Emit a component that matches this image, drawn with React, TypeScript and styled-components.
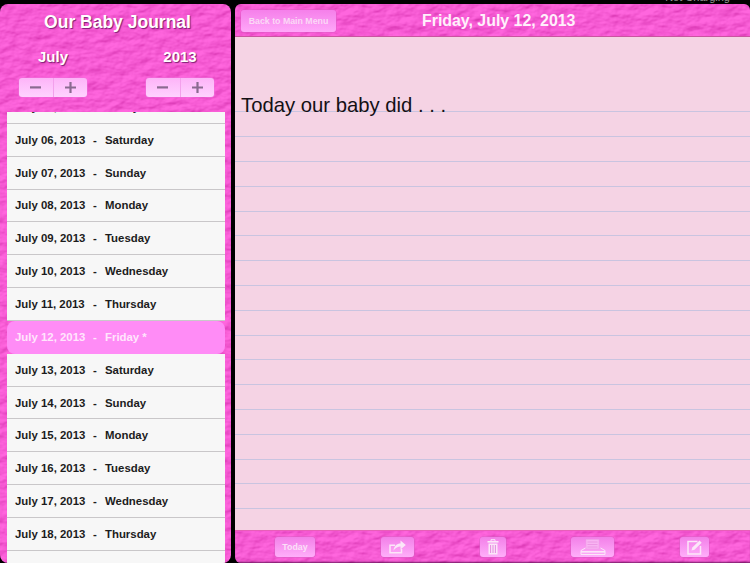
import React from "react";
import styled, { createGlobalStyle } from "styled-components";

const texture = `url("data:image/svg+xml,${encodeURIComponent(
  `<svg xmlns='http://www.w3.org/2000/svg' width='300' height='300'><filter id='f' x='0' y='0' width='100%' height='100%' color-interpolation-filters='sRGB'><feTurbulence type='fractalNoise' baseFrequency='0.07 0.12' numOctaves='3' seed='7' stitchTiles='stitch'/><feDiffuseLighting surfaceScale='1.3' diffuseConstant='1' lighting-color='#ffffff'><feDistantLight azimuth='235' elevation='60'/></feDiffuseLighting><feColorMatrix type='matrix' values='0 0 0 0 0.72  0 0 0 0 0.05  0 0 0 0 0.55  -1.5 0 0 0 1.42'/></filter><rect width='300' height='300' filter='url(#f)'/></svg>`
)}")`;

const GlobalStyle = createGlobalStyle`
  html, body {
    margin: 0;
    padding: 0;
    background: black;
    overflow: hidden;
  }
  * {
    box-sizing: border-box;
  }
`;

const Screen = styled.div`
  width: 750px;
  height: 563px;
  background: black;
  font-family: "Liberation Sans", Arial, sans-serif;
  display: flex;
  flex-direction: column;
  overflow: hidden;
`;

const StatusBar = styled.div`
  height: 4px;
  flex: none;
  overflow: hidden;
  display: flex;
  justify-content: flex-end;
  color: #9a9a9a;
  font-size: 11px;
  line-height: 4px;
  padding-right: 20px;
`;

const StatusText = styled.span`
  margin-top: -5px;
`;

const Columns = styled.div`
  flex: 1;
  min-height: 0;
  display: flex;
  gap: 4px;
`;

const Sidebar = styled.aside`
  width: 231px;
  flex: none;
  background-color: #ff66de;
  background-image: ${texture};
  border-radius: 8px;
  display: flex;
  flex-direction: column;
  overflow: hidden;
`;

const AppTitle = styled.h1`
  margin: 8px 0 0;
  height: 20px;
  padding-left: 4px;
  font-size: 17.5px;
  line-height: 20px;
  font-weight: bold;
  text-align: center;
  color: #fff;
  text-shadow: 1px 1px 1px #7a2070;
`;

const PickerRow = styled.div`
  display: flex;
  justify-content: space-between;
  padding: 16px 17px 0 19px;
  height: 80px;
  flex: none;
`;

const Picker = styled.div`
  width: 68px;
  display: flex;
  flex-direction: column;
  align-items: center;
  gap: 12px;
`;

const PickerLabel = styled.div`
  height: 18px;
  font-size: 15px;
  line-height: 18px;
  font-weight: bold;
  color: #fff;
  text-shadow: 1px 1px 1px #7a2070;
`;

const Stepper = styled.div`
  width: 68px;
  height: 19px;
  display: flex;
  border-radius: 3px;
  overflow: hidden;
  background: linear-gradient(#fdb4f8, #ffd2ff);
  box-shadow: 0 0 0 0.5px #f070dc;
`;

const StepButton = styled.div<{ $divider?: boolean }>`
  flex: 1;
  display: flex;
  align-items: center;
  justify-content: center;
  border-left: ${(p) => (p.$divider ? "1px solid #f3a0ec" : "none")};
`;

const RowList = styled.div`
  flex: 1;
  min-height: 0;
  margin: 0 6px 0 7px;
  overflow: hidden;
`;

const RowTrack = styled.div`
  margin-top: -21px;
`;

const DayRow = styled.div<{ $active?: boolean }>`
  height: 32.85px;
  display: flex;
  align-items: center;
  padding-left: 8px;
  font-size: 11.4px;
  font-weight: bold;
  color: ${(p) => (p.$active ? "#ffe6fc" : "#1c1c1c")};
  background: ${(p) => (p.$active ? "#ff8cf6" : "#f7f7f7")};
  border-bottom: 1px solid ${(p) => (p.$active ? "#ff8cf6" : "#c9c7c9")};
  border-radius: ${(p) => (p.$active ? "8px" : "0")};
`;

const DayDate = styled.span`
  width: 78px;
`;

const DayDash = styled.span`
  width: 12px;
`;

const Journal = styled.main`
  flex: 1;
  min-width: 0;
  display: flex;
  flex-direction: column;
  border-radius: 6px 6px 0 6px;
  overflow: hidden;
`;

const HeaderBar = styled.header`
  height: 33px;
  flex: none;
  display: flex;
  align-items: center;
  padding: 1px 0 0 6px;
  background-color: #ff66de;
  background-image: ${texture};
  border-bottom: 1px solid #c9559f;
`;

const BackButton = styled.div`
  width: 95px;
  height: 22px;
  border-radius: 3px;
  display: flex;
  align-items: center;
  justify-content: center;
  font-size: 8.8px;
  font-weight: bold;
  color: #fbd8f6;
  background: linear-gradient(#f57fea, #ffa8f9);
  box-shadow: 0 0 0 0.5px #e05cc8;
`;

const DateTitle = styled.div`
  margin-left: 86px;
  font-size: 15.9px;
  font-weight: bold;
  color: #fff0fb;
`;

const Paper = styled.section`
  flex: 1;
  min-height: 0;
  background-color: #f5d3e4;
  background-image: linear-gradient(#f5d3e4, #f5d3e4),
    repeating-linear-gradient(
      to bottom,
      transparent 0,
      transparent 23.8px,
      #c9c4e0 23.8px,
      #c9c4e0 24.8px
    );
  background-size: 100% 74px, 100% 100%;
  background-repeat: no-repeat;
  background-position: 0 0, 0 1.4px;
  padding: 55px 0 0 6px;
`;

const EntryText = styled.div`
  font-size: 20.3px;
  line-height: 26px;
  color: #141014;
`;

const Toolbar = styled.footer`
  height: 33px;
  flex: none;
  display: flex;
  align-items: flex-start;
  justify-content: space-between;
  padding: 6px 41px 0 40px;
  background-color: #ff66de;
  background-image: ${texture};
  border-top: 1px solid #e85fb8;
  box-shadow: inset 0 -2px 2px -1px rgba(70, 0, 60, 0.75);
`;

const ToolButton = styled.div<{ $width: number }>`
  width: ${(p) => p.$width}px;
  height: 20px;
  border-radius: 3px;
  display: flex;
  align-items: center;
  justify-content: center;
  font-size: 8.8px;
  font-weight: bold;
  color: #fbe0f8;
  background: linear-gradient(#f27fe8, #ffaefa);
  box-shadow: 0 0 0 0.5px #d860c4;
`;

const dayRows = [
  { date: "July 05, 2013", day: "Friday" },
  { date: "July 06, 2013", day: "Saturday" },
  { date: "July 07, 2013", day: "Sunday" },
  { date: "July 08, 2013", day: "Monday" },
  { date: "July 09, 2013", day: "Tuesday" },
  { date: "July 10, 2013", day: "Wednesday" },
  { date: "July 11, 2013", day: "Thursday" },
  { date: "July 12, 2013", day: "Friday *", active: true },
  { date: "July 13, 2013", day: "Saturday" },
  { date: "July 14, 2013", day: "Sunday" },
  { date: "July 15, 2013", day: "Monday" },
  { date: "July 16, 2013", day: "Tuesday" },
  { date: "July 17, 2013", day: "Wednesday" },
  { date: "July 18, 2013", day: "Thursday" },
  { date: "July 19, 2013", day: "Friday" },
];

const MinusIcon = () => (
  <svg width="11" height="11" viewBox="0 0 11 11">
    <rect x="0" y="4.3" width="11" height="2.2" fill="#8a6a90" />
  </svg>
);

const PlusIcon = () => (
  <svg width="11" height="11" viewBox="0 0 11 11">
    <path d="M4.4 0h2.2v4.4H11v2.2H6.6V11H4.4V6.6H0V4.4h4.4z" fill="#8a6a90" />
  </svg>
);

const ShareIcon = () => (
  <svg width="17" height="14" viewBox="0 0 17 14" fill="none">
    <path d="M12.500 9V12.800H1V5.200H6" stroke="#fbe6f8" strokeWidth="1.500" />
    <path d="M4.500 10.500C5 6 8 3.600 11.500 3.600V.5L16.800 5 11.500 9.500V6.400C9 6.400 6.500 7.800 4.500 10.500z" fill="#fbe6f8" />
  </svg>
);

const TrashIcon = () => (
  <svg width="12" height="16" viewBox="0 0 12 16" fill="none">
    <rect x="0.5" y="2" width="11" height="1.600" fill="#fbe6f8" />
    <path d="M4 2V.7h4V2" stroke="#fbe6f8" strokeWidth="1" />
    <path d="M1.500 4.500h9V15.500h-9z" fill="#fbe6f8" />
    <path d="M3.600 6v8M6 6v8M8.400 6v8" stroke="#e080da" strokeWidth="0.9" />
  </svg>
);

const PrintIcon = () => (
  <svg width="26" height="16" viewBox="0 0 26 16" fill="none">
    <path d="M6 0.500h13V10H6z" fill="#f8b4f2" stroke="#f0a0e8" strokeWidth="0.6" />
    <path d="M7.500 3h10M7.500 5.500h10M7.500 8h10" stroke="#e88ce0" strokeWidth="0.7" />
    <path d="M5.500 9 1 11.500V15.500H25V11.500L20.500 9" stroke="#fbe6f8" strokeWidth="1" />
    <rect x="1" y="12" width="24" height="1.600" fill="#fbe6f8" />
  </svg>
);

const ComposeIcon = () => (
  <svg width="15" height="15" viewBox="0 0 15 15" fill="none">
    <path d="M10.500 1.500H1V14H13.500V6" stroke="#fbe6f8" strokeWidth="1.500" />
    <path d="M4.500 10.500 5.300 7.500 12.500 .5 14.700 2.700 7.500 9.800z" fill="#fbe6f8" />
  </svg>
);

export default function App() {
  return (
    <>
      <GlobalStyle />
      <Screen>
        <StatusBar>
          <StatusText>Not Charging</StatusText>
        </StatusBar>
        <Columns>
          <Sidebar>
            <AppTitle>Our Baby Journal</AppTitle>
            <PickerRow>
              <Picker>
                <PickerLabel>July</PickerLabel>
                <Stepper>
                  <StepButton><MinusIcon /></StepButton>
                  <StepButton $divider><PlusIcon /></StepButton>
                </Stepper>
              </Picker>
              <Picker>
                <PickerLabel>2013</PickerLabel>
                <Stepper>
                  <StepButton><MinusIcon /></StepButton>
                  <StepButton $divider><PlusIcon /></StepButton>
                </Stepper>
              </Picker>
            </PickerRow>
            <RowList>
              <RowTrack>
                {dayRows.map((row) => (
                  <DayRow key={row.date} $active={row.active}>
                    <DayDate>{row.date}</DayDate>
                    <DayDash>-</DayDash>
                    <span>{row.day}</span>
                  </DayRow>
                ))}
              </RowTrack>
            </RowList>
          </Sidebar>
          <Journal>
            <HeaderBar>
              <BackButton>Back to Main Menu</BackButton>
              <DateTitle>Friday, July 12, 2013</DateTitle>
            </HeaderBar>
            <Paper>
              <EntryText>Today our baby did . . .</EntryText>
            </Paper>
            <Toolbar>
              <ToolButton $width={40}>Today</ToolButton>
              <ToolButton $width={33}><ShareIcon /></ToolButton>
              <ToolButton $width={26}><TrashIcon /></ToolButton>
              <ToolButton $width={43}><PrintIcon /></ToolButton>
              <ToolButton $width={29}><ComposeIcon /></ToolButton>
            </Toolbar>
          </Journal>
        </Columns>
      </Screen>
    </>
  );
}
